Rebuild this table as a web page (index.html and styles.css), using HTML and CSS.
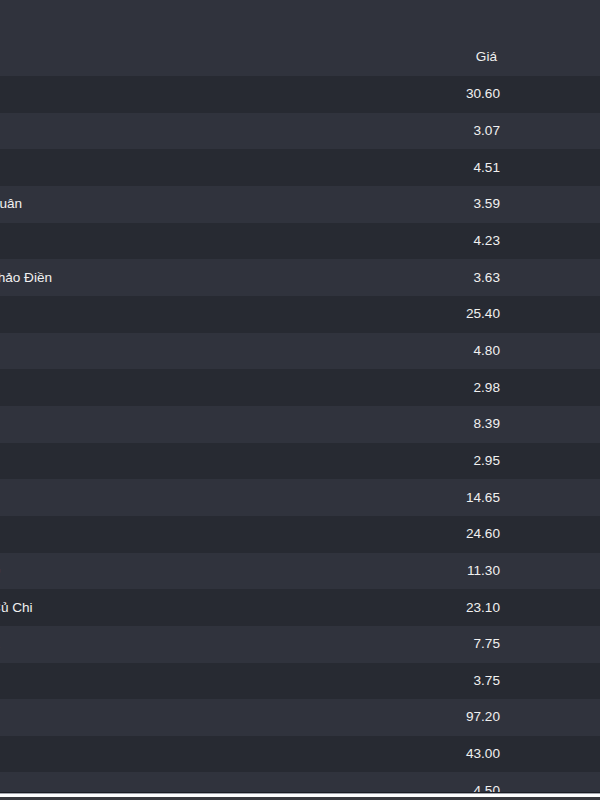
FILE: index.html
```html
<!DOCTYPE html>
<html lang="vi">
<head>
    <meta charset="UTF-8">
    <meta name="viewport" content="width=device-width, initial-scale=1.0">
    <title>Bảng giá</title>
    <link rel="stylesheet" href="styles.css">
</head>
<body>
    <div class="table-wrap">
        <table class="price-table">
            <thead>
                <tr>
                    <th class="name">Khu vực</th>
                    <th class="price">Giá</th>
                </tr>
            </thead>
            <tbody>
                <tr><td class="name">Quận 1</td><td class="price">30.60</td></tr>
                <tr><td class="name">Gò Vấp</td><td class="price">3.07</td></tr>
                <tr><td class="name">Quận 7</td><td class="price">4.51</td></tr>
                <tr><td class="name">Thanh Xuân</td><td class="price">3.59</td></tr>
                <tr><td class="name">Nhà Bè</td><td class="price">4.23</td></tr>
                <tr><td class="name">Dự án Thảo Điền</td><td class="price">3.63</td></tr>
                <tr><td class="name">Quận 3</td><td class="price">25.40</td></tr>
                <tr><td class="name">Quận 8</td><td class="price">4.80</td></tr>
                <tr><td class="name">Quận 9</td><td class="price">2.98</td></tr>
                <tr><td class="name">Quận 5</td><td class="price">8.39</td></tr>
                <tr><td class="name">Cần Giờ</td><td class="price">2.95</td></tr>
                <tr><td class="name">Quận 4</td><td class="price">14.65</td></tr>
                <tr><td class="name">Quận 6</td><td class="price">24.60</td></tr>
                <tr><td class="name">Quận 10</td><td class="price">11.30</td></tr>
                <tr><td class="name">Huyện Củ Chi</td><td class="price">23.10</td></tr>
                <tr><td class="name">Quận 12</td><td class="price">7.75</td></tr>
                <tr><td class="name">Quận 11</td><td class="price">3.75</td></tr>
                <tr><td class="name">Ba Đình</td><td class="price">97.20</td></tr>
                <tr><td class="name">Tây Hồ</td><td class="price">43.00</td></tr>
                <tr><td class="name">Hà Nam</td><td class="price">4.50</td></tr>
            </tbody>
        </table>
    </div>
    <div class="scroll-bar"></div>
</body>
</html>
```

FILE: styles.css
```css
/* Global Styles */
body {
    margin: 0;
    font-family: 'Liberation Sans', Arial, sans-serif;
    font-size: 13.6px;
    background: #30333d;
    color: #f0f0f0;
}

/* Table */
.table-wrap {
    height: 792px;
    overflow: hidden;
    border-bottom: 1px solid #1c1e24;
}

.price-table {
    width: calc(100% + 52px);
    margin-left: -52px;
    border-collapse: collapse;
}

.price-table th {
    height: 65px;
    padding: 0 0 11px 0;
    line-height: 16px;
    font-weight: normal;
    vertical-align: bottom;
    background: #30333d;
}

.price-table td {
    height: 36.67px;
    padding: 0;
    line-height: 16px;
    vertical-align: middle;
}

.price-table tbody tr:nth-child(odd) {
    background: #272a32;
}

.price-table tbody tr:nth-child(even) {
    background: #30333d;
}

.name {
    text-align: left;
    white-space: nowrap;
}

.price-table th.name {
    color: transparent;
}

.price-table td.price {
    text-align: right;
    padding-right: 100px;
}

.price-table th.price {
    text-align: right;
    padding-right: 103px;
}

/* Bottom edge */
.scroll-bar {
    height: 3px;
    background: #ffffff;
    border-top: 1px solid #a4a6ae;
    border-bottom: 3px solid #3a3b40;
}
```
